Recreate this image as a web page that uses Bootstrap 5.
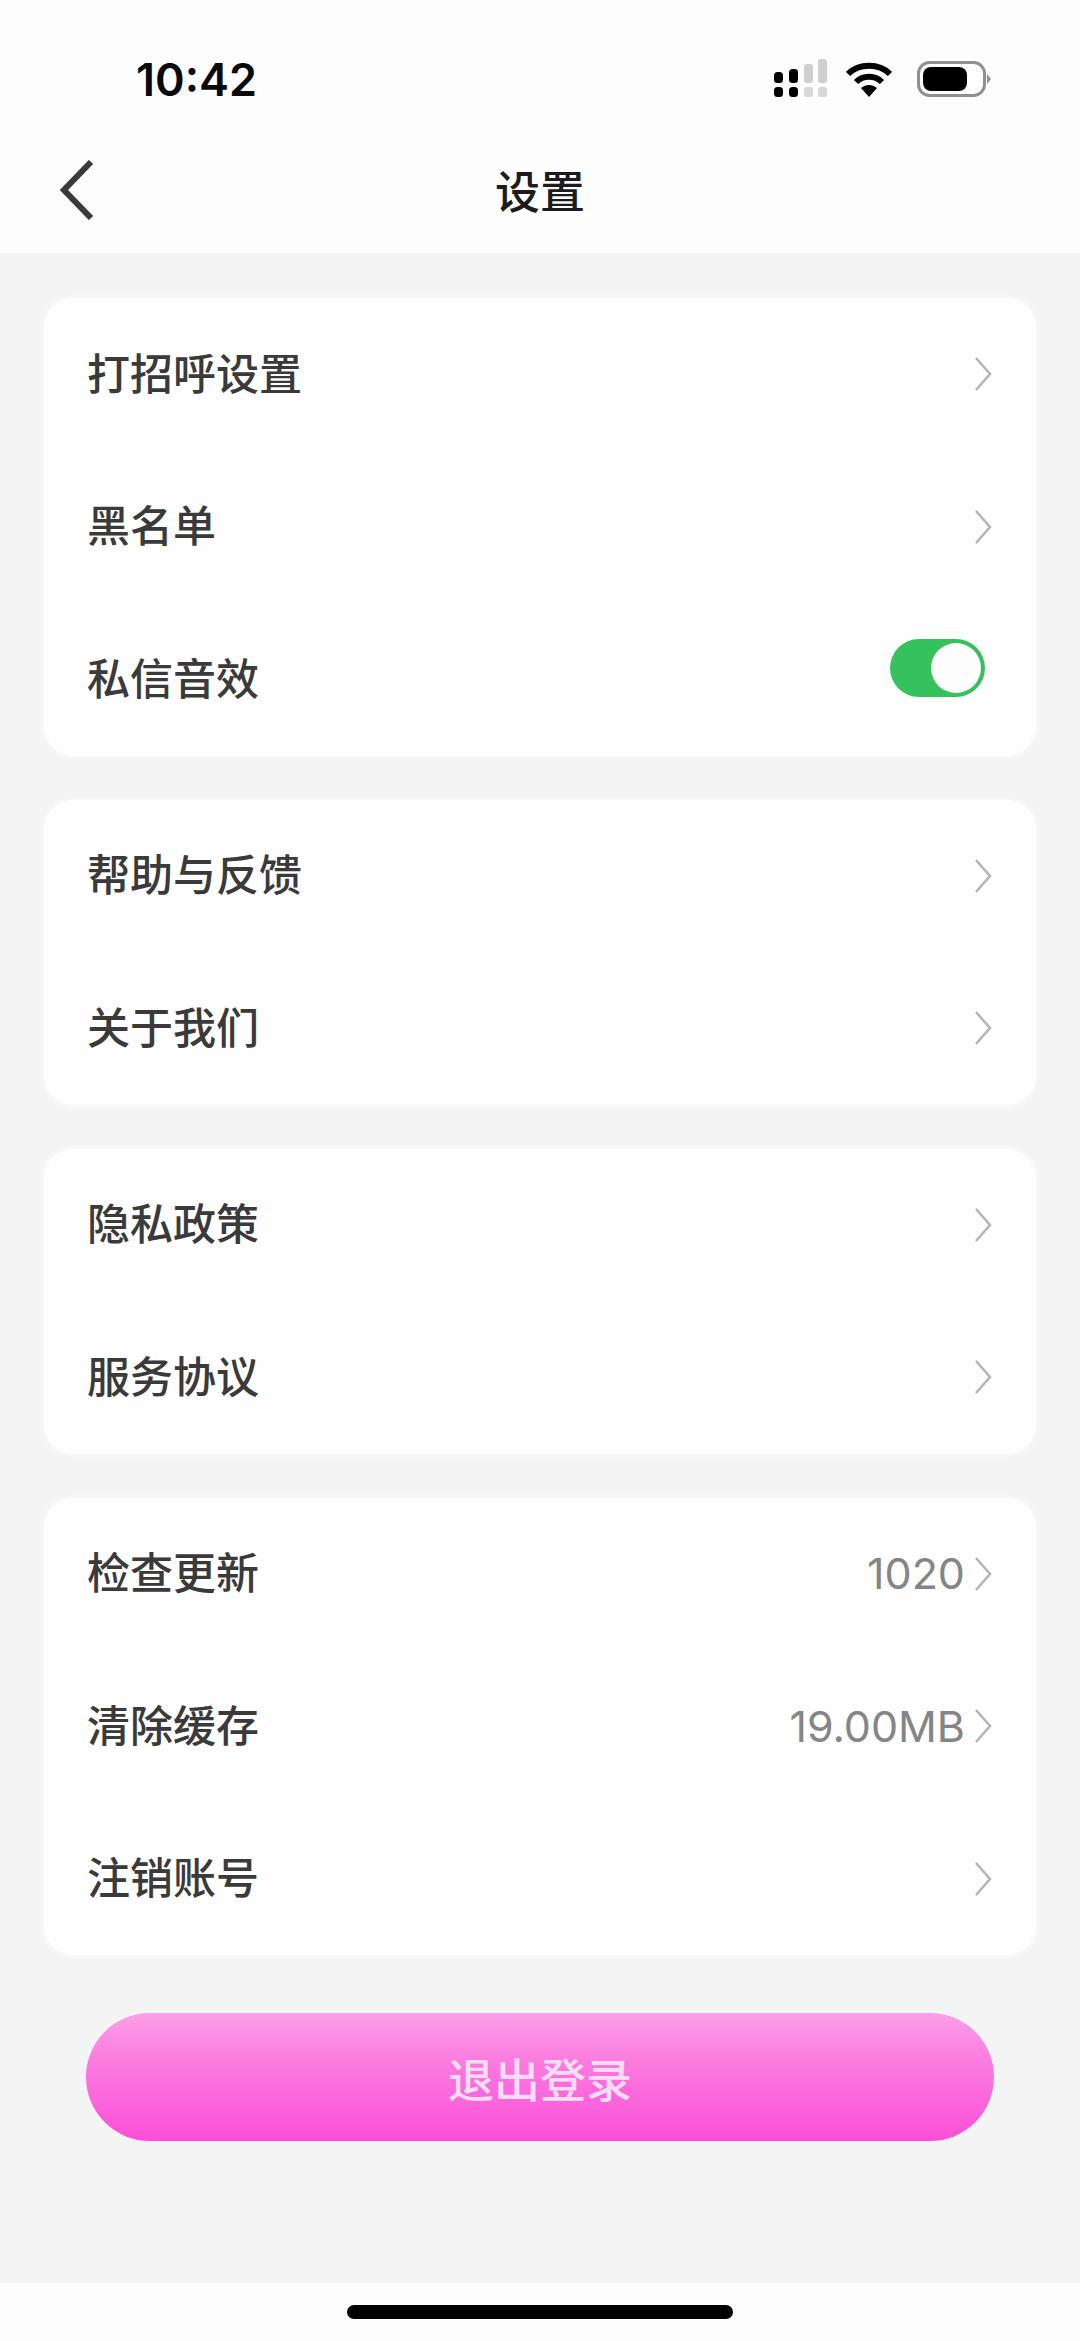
<!DOCTYPE html>
<html lang="zh-CN">
<head>
    <meta charset="UTF-8">
    <meta name="viewport" content="width=device-width, initial-scale=1.0">
    <title>设置</title>
    <link href="https://cdn.jsdelivr.net/npm/bootstrap@5.3.0/dist/css/bootstrap.min.css" rel="stylesheet">
    <style>
        html, body { height: 100%; }
        body { font-family: "Noto Sans CJK SC", "Liberation Sans", sans-serif; background: #f4f4f4; color: #333; }
        .phone { width: 1080px; height: 2341px; }
        .top-area { height: 253px; background: #fdfdfd; }
        .status-row { height: 130px; padding: 28px 89px 0 136px; }
        .clock { font-family: Inter, "Liberation Sans", sans-serif; font-size: 45px; font-weight: 600; color: #0a0a0a; line-height: 1; }
        .wifi-icon { margin-left: 17px; }
        .battery-icon { margin-left: 25px; }
        .title-row { height: 123px; }
        .back-btn { left: 60px; top: 30px; }
        .page-title { font-size: 45px; font-weight: 500; color: #1c1c1c; line-height: 1; margin-bottom: 4px; }
        .settings-list { padding: 45px 44px 0; gap: 44px; }
        .group-box { background: #fefefe; border-radius: 30px; box-shadow: 0 0 6px rgba(255,255,255,.9); }
        .set-row { height: 152.5px; padding: 0 44px 0 43px; }
        .set-label { font-size: 43px; font-weight: 500; color: #3a3a3a; line-height: 1; margin-bottom: 6px; }
        .set-value { font-family: Inter, "Liberation Sans", sans-serif; font-size: 43px; color: #858585; line-height: 1; margin-right: 9px; }
        .switch-on { width: 95px; height: 58px; background: #35c15b; border-radius: 29px; padding: 4px; margin-right: 7px; margin-bottom: 22px; }
        .switch-knob { width: 50px; height: 50px; background: #fdfdfd; border-radius: 50%; }
        .logout-wrap { padding: 58px 86px 0; }
        .logout-btn { height: 128px; border-radius: 64px; border: 0; font-size: 46px; font-weight: 500; color: #fbdcf5; background: linear-gradient(180deg, #fb9fe8 0%, #fb79df 40%, #fb4fd7 100%); }
        .logout-btn:hover, .logout-btn:active { color: #fbdcf5; background: linear-gradient(180deg, #fb9fe8 0%, #fb79df 40%, #fb4fd7 100%); }
        .home-area { height: 58px; background: #fdfdfd; }
        .home-bar { width: 386px; height: 14px; background: #000; border-radius: 7px; }
    </style>
</head>
<body>
<div class="phone d-flex flex-column">

    <!-- Status bar and title -->
    <div class="top-area">
        <div class="status-row d-flex justify-content-between align-items-center">
            <span class="clock">10:42</span>
            <div class="d-flex align-items-center">
                <svg width="56" height="40" viewBox="0 0 56 40">
                    <rect x="1" y="13" width="9" height="11" rx="3.5" fill="#000"/>
                    <rect x="1" y="28" width="9" height="10" rx="3.5" fill="#000"/>
                    <rect x="16" y="10" width="9" height="14" rx="3.5" fill="#000"/>
                    <rect x="16" y="28" width="9" height="10" rx="3.5" fill="#000"/>
                    <rect x="31" y="5" width="9" height="19" rx="3" fill="#cfcfcf"/>
                    <rect x="31" y="28" width="9" height="10" rx="2.5" fill="#d8d8d8"/>
                    <rect x="45" y="0" width="9" height="24" rx="3" fill="#cfcfcf"/>
                    <rect x="45" y="28" width="9" height="10" rx="2.5" fill="#d8d8d8"/>
                </svg>
                <svg class="wifi-icon" width="46" height="36" viewBox="0 0 46 36">
                    <path d="M2 13 C13 2 33 2 44 13" fill="none" stroke="#000" stroke-width="6"/>
                    <path d="M10 21 C17 14 29 14 36 21" fill="none" stroke="#000" stroke-width="6"/>
                    <path d="M15 27 C20 23 26 23 31 27 L23 36 Z" fill="#000"/>
                </svg>
                <svg class="battery-icon" width="74" height="36" viewBox="0 0 74 36">
                    <rect x="1.5" y="1.5" width="66" height="33" rx="11" fill="#fff" stroke="#8f8f8f" stroke-width="3"/>
                    <rect x="6" y="6" width="44" height="24" rx="8" fill="#000"/>
                    <path d="M70 13 L74 18 L70 23 Z" fill="#8f8f8f"/>
                </svg>
            </div>
        </div>
        <div class="title-row position-relative d-flex justify-content-center align-items-center">
            <svg class="back-btn position-absolute" width="34" height="60" viewBox="0 0 34 60">
                <path d="M31 2 L4 30 L31 58" fill="none" stroke="#3a3a3a" stroke-width="6"/>
            </svg>
            <span class="page-title">设置</span>
        </div>
    </div>

    <!-- Settings groups -->
    <div class="settings-list d-flex flex-column flex-grow-0">
        <div class="group-box">
            <div class="set-row d-flex align-items-center justify-content-between">
                <span class="set-label">打招呼设置</span>
                <svg width="18" height="36" viewBox="0 0 18 36"><path d="M2 2 L16 18 L2 34" fill="none" stroke="#b4b4b4" stroke-width="2.5"/></svg>
            </div>
            <div class="set-row d-flex align-items-center justify-content-between">
                <span class="set-label">黑名单</span>
                <svg width="18" height="36" viewBox="0 0 18 36"><path d="M2 2 L16 18 L2 34" fill="none" stroke="#b4b4b4" stroke-width="2.5"/></svg>
            </div>
            <div class="set-row d-flex align-items-center justify-content-between">
                <span class="set-label">私信音效</span>
                <div class="switch-on d-flex justify-content-end"><div class="switch-knob"></div></div>
            </div>
        </div>
        <div class="group-box">
            <div class="set-row d-flex align-items-center justify-content-between">
                <span class="set-label">帮助与反馈</span>
                <svg width="18" height="36" viewBox="0 0 18 36"><path d="M2 2 L16 18 L2 34" fill="none" stroke="#b4b4b4" stroke-width="2.5"/></svg>
            </div>
            <div class="set-row d-flex align-items-center justify-content-between">
                <span class="set-label">关于我们</span>
                <svg width="18" height="36" viewBox="0 0 18 36"><path d="M2 2 L16 18 L2 34" fill="none" stroke="#b4b4b4" stroke-width="2.5"/></svg>
            </div>
        </div>
        <div class="group-box">
            <div class="set-row d-flex align-items-center justify-content-between">
                <span class="set-label">隐私政策</span>
                <svg width="18" height="36" viewBox="0 0 18 36"><path d="M2 2 L16 18 L2 34" fill="none" stroke="#b4b4b4" stroke-width="2.5"/></svg>
            </div>
            <div class="set-row d-flex align-items-center justify-content-between">
                <span class="set-label">服务协议</span>
                <svg width="18" height="36" viewBox="0 0 18 36"><path d="M2 2 L16 18 L2 34" fill="none" stroke="#b4b4b4" stroke-width="2.5"/></svg>
            </div>
        </div>
        <div class="group-box">
            <div class="set-row d-flex align-items-center">
                <span class="set-label me-auto">检查更新</span>
                <span class="set-value">1020</span>
                <svg width="18" height="36" viewBox="0 0 18 36"><path d="M2 2 L16 18 L2 34" fill="none" stroke="#b4b4b4" stroke-width="2.5"/></svg>
            </div>
            <div class="set-row d-flex align-items-center">
                <span class="set-label me-auto">清除缓存</span>
                <span class="set-value">19.00MB</span>
                <svg width="18" height="36" viewBox="0 0 18 36"><path d="M2 2 L16 18 L2 34" fill="none" stroke="#b4b4b4" stroke-width="2.5"/></svg>
            </div>
            <div class="set-row d-flex align-items-center justify-content-between">
                <span class="set-label">注销账号</span>
                <svg width="18" height="36" viewBox="0 0 18 36"><path d="M2 2 L16 18 L2 34" fill="none" stroke="#b4b4b4" stroke-width="2.5"/></svg>
            </div>
        </div>
    </div>

    <!-- Logout -->
    <div class="logout-wrap">
        <button type="button" class="btn logout-btn w-100 d-flex align-items-center justify-content-center">退出登录</button>
    </div>

    <!-- Home indicator -->
    <div class="home-area mt-auto d-flex justify-content-center align-items-center">
        <div class="home-bar"></div>
    </div>
</div>
<script src="https://cdn.jsdelivr.net/npm/bootstrap@5.3.0/dist/js/bootstrap.bundle.min.js"></script>
</body>
</html>
